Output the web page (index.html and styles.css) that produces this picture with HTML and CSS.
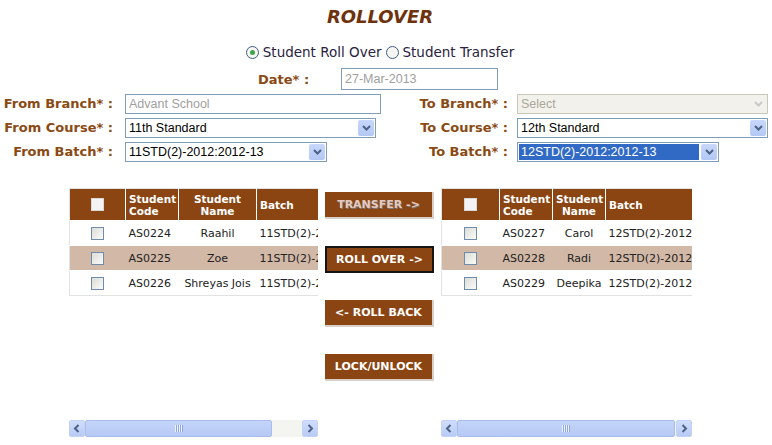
FILE: index.html
```html
<!DOCTYPE html>
<html>
<head>
<meta charset="utf-8">
<link rel="stylesheet" href="styles.css">
</head>
<body>
<h1 class="title">ROLLOVER</h1>
<div class="radios">
  <label class="radio"><span class="rb on"></span>Student Roll Over</label>
  <label class="radio"><span class="rb"></span>Student Transfer</label>
</div>
<div class="date-row">
  <span class="lbl">Date* :</span>
  <span class="inp date">27-Mar-2013</span>
</div>
<div class="form">
  <span class="lbl">From Branch* :</span>
  <span class="inp branch f2">Advant School</span>
  <span class="lbl">To Branch* :</span>
  <span class="sel wide disabled f4"><span class="txt">Select</span><span class="arr"><svg width="9" height="6" viewBox="0 0 9 6"><path d="M1 1 L4.5 4.5 L8 1" fill="none" stroke="#c9c9c9" stroke-width="2"/></svg></span></span>

  <span class="lbl">From Course* :</span>
  <span class="sel course f2"><span class="txt">11th Standard</span><span class="arr"><svg width="9" height="6" viewBox="0 0 9 6"><path d="M1 1 L4.5 4.5 L8 1" fill="none" stroke="#4d6185" stroke-width="2"/></svg></span></span>
  <span class="lbl">To Course* :</span>
  <span class="sel wide f4"><span class="txt">12th Standard</span><span class="arr"><svg width="9" height="6" viewBox="0 0 9 6"><path d="M1 1 L4.5 4.5 L8 1" fill="none" stroke="#4d6185" stroke-width="2"/></svg></span></span>

  <span class="lbl">From Batch* :</span>
  <span class="sel batch f2"><span class="txt">11STD(2)-2012:2012-13</span><span class="arr"><svg width="9" height="6" viewBox="0 0 9 6"><path d="M1 1 L4.5 4.5 L8 1" fill="none" stroke="#4d6185" stroke-width="2"/></svg></span></span>
  <span class="lbl">To Batch* :</span>
  <span class="sel batch f4"><span class="txt hl">12STD(2)-2012:2012-13</span><span class="arr"><svg width="9" height="6" viewBox="0 0 9 6"><path d="M1 1 L4.5 4.5 L8 1" fill="none" stroke="#4d6185" stroke-width="2"/></svg></span></span>
</div>

<div class="main">
  <div class="pane left">
    <div class="clip">
      <table class="grid g1">
        <colgroup><col class="w0"><col class="w1"><col class="w2"><col class="w3"></colgroup>
        <thead>
          <tr><th class="c0"><span class="cb hd"></span></th><th>Student<br>Code</th><th class="ctr">Student<br>Name</th><th>Batch</th></tr>
        </thead>
        <tbody>
          <tr><td class="c0"><span class="cb"></span></td><td>AS0224</td><td class="ctr">Raahil</td><td>11STD(2)-2012:2012-13</td></tr>
          <tr class="alt"><td class="c0"><span class="cb"></span></td><td>AS0225</td><td class="ctr">Zoe</td><td>11STD(2)-2012:2012-13</td></tr>
          <tr><td class="c0"><span class="cb"></span></td><td>AS0226</td><td class="ctr">Shreyas Jois</td><td>11STD(2)-2012:2012-13</td></tr>
        </tbody>
      </table>
    </div>
    <div class="hscroll">
      <span class="sbtn"><svg width="8" height="9" viewBox="0 0 8 9"><path d="M5.5 1 L2 4.5 L5.5 8" fill="none" stroke="#4d6185" stroke-width="2"/></svg></span>
      <span class="thumb t1"><span class="grip"></span></span>
      <span class="track"></span>
      <span class="sbtn"><svg width="8" height="9" viewBox="0 0 8 9"><path d="M2.5 1 L6 4.5 L2.5 8" fill="none" stroke="#4d6185" stroke-width="2"/></svg></span>
    </div>
  </div>

  <div class="actions">
    <button class="btn dis">TRANSFER -&gt;</button>
    <button class="btn focus">ROLL OVER -&gt;</button>
    <button class="btn">&lt;- ROLL BACK</button>
    <button class="btn">LOCK/UNLOCK</button>
  </div>

  <div class="pane right">
    <div class="clip">
      <table class="grid g2">
        <colgroup><col class="w0"><col class="w1"><col class="w2"><col class="w3"></colgroup>
        <thead>
          <tr><th class="c0"><span class="cb hd"></span></th><th>Student<br>Code</th><th class="ctr">Student<br>Name</th><th>Batch</th></tr>
        </thead>
        <tbody>
          <tr><td class="c0"><span class="cb"></span></td><td>AS0227</td><td class="ctr">Carol</td><td>12STD(2)-2012:2012-13</td></tr>
          <tr class="alt"><td class="c0"><span class="cb"></span></td><td>AS0228</td><td class="ctr">Radi</td><td>12STD(2)-2012:2012-13</td></tr>
          <tr><td class="c0"><span class="cb"></span></td><td>AS0229</td><td class="ctr">Deepika</td><td>12STD(2)-2012:2012-13</td></tr>
        </tbody>
      </table>
    </div>
    <div class="hscroll">
      <span class="sbtn"><svg width="8" height="9" viewBox="0 0 8 9"><path d="M5.5 1 L2 4.5 L5.5 8" fill="none" stroke="#4d6185" stroke-width="2"/></svg></span>
      <span class="thumb t2"><span class="grip"></span></span>
      <span class="track"></span>
      <span class="sbtn"><svg width="8" height="9" viewBox="0 0 8 9"><path d="M2.5 1 L6 4.5 L2.5 8" fill="none" stroke="#4d6185" stroke-width="2"/></svg></span>
    </div>
  </div>
</div>
</body>
</html>
```

FILE: styles.css
```css
html, body { margin: 0; padding: 0; background: #fff; }
body { font-family: "DejaVu Sans", Verdana, sans-serif; font-size: 13px; color: #222; width: 772px; height: 445px; overflow: hidden; }

.title { margin: 0; padding: 6px 12px 0 0; height: 24px; text-align: center; font-size: 18px; font-weight: bold; font-style: italic; color: #6e320c; }

.radios { display: flex; justify-content: center; gap: 4px; margin-top: 13px; padding-right: 12px; height: 18px; align-items: center; color: #2a2240; font-size: 13.5px; }
.radio { display: flex; align-items: center; gap: 4px; }
.rb { width: 11px; height: 11px; border: 1px solid #3b5f87; border-radius: 50%; background: #f6f6f3; position: relative; }
.rb.on::after { content: ""; position: absolute; left: 3px; top: 3px; width: 5px; height: 5px; border-radius: 50%; background: #3fa34a; }

.lbl { font-weight: bold; color: #8a4a14; white-space: nowrap; }

.date-row { display: flex; align-items: center; margin-top: 7px; height: 22px; padding-left: 258px; }
.date-row .lbl { width: 83px; }

.inp { display: flex; align-items: center; box-sizing: border-box; border: 1px solid #7f9db9; height: 20px; padding-left: 3px; font-family: "Liberation Sans", Arial, sans-serif; font-size: 12.5px; color: #a0a0a0; background: #fff; }
.inp.date { width: 157px; height: 22px; }
.inp.branch { width: 256px; }

.form { display: grid; grid-template-columns: 113px 265px 130px 260px; grid-auto-rows: 20px; row-gap: 4px; margin-top: 4px; align-items: center; }
.form .lbl { text-align: right; line-height: 20px; }
.form .f2 { margin-left: 12px; }
.form .f4 { margin-left: 9px; }

.sel { display: flex; align-items: stretch; box-sizing: border-box; border: 1px solid #7f9db9; height: 20px; padding: 1px; background: #fff; font-family: "Liberation Sans", Arial, sans-serif; font-size: 12.5px; color: #000; }
.sel .txt { flex: 1; display: flex; align-items: center; padding-left: 2px; white-space: nowrap; overflow: hidden; }
.sel .txt.hl { background: #316ac5; color: #fff; margin-right: 2px; }
.sel .arr { width: 16px; display: flex; align-items: center; justify-content: center; background: linear-gradient(#c8d7fb, #b2c8f4); border-radius: 2px; }
.sel.course { width: 251px; }
.sel.wide { width: 251px; }
.sel.batch { width: 202px; }
.sel.disabled { background: #f2f1ec; border-color: #c9c7ba; color: #aca899; }
.sel.disabled .arr { background: #f2f1ec; }

.main { display: flex; margin-top: 26px; padding-left: 69px; gap: 7px; }
.pane { display: flex; flex-direction: column; height: 249px; }
.pane.left { width: 249px; }
.pane.right { width: 251px; }
.clip { overflow: hidden; flex: 1; }

.grid { border-collapse: collapse; table-layout: fixed; font-size: 11px; white-space: nowrap; border: 1px solid #e2e2e2; }
.g1 { width: 360px; }
.g2 { width: 360px; }
.g1 .w0 { width: 56px; } .g1 .w1 { width: 53px; } .g1 .w2 { width: 78px; } .g1 .w3 { width: 173px; }
.g2 .w0 { width: 58px; } .g2 .w1 { width: 53px; } .g2 .w2 { width: 53px; } .g2 .w3 { width: 196px; }
.grid th { background: #8b4513; color: #fff; font-weight: bold; font-size: 10.5px; text-align: left; height: 31px; padding: 0 3px; line-height: 12px; border-left: 1px solid #fff; overflow: hidden; }
.grid th:first-child { border-left: none; }
.grid td { height: 24px; padding: 0 3px; color: #222; border-top: 1px solid #fff; overflow: hidden; }
.grid .ctr { text-align: center; }
.grid .c0 { text-align: center; }
.grid tr.alt td { background: #d2b8a6; }

.cb { display: inline-block; width: 11px; height: 11px; border: 1px solid #6f8cac; background: linear-gradient(135deg, #dcdcd6, #fbfbf9); vertical-align: middle; }
.cb.hd { background: #f4f4f4; border-color: #d8d8d8; }

.actions { display: flex; flex-direction: column; gap: 27px; padding-top: 4px; width: 109px; }
.btn { box-sizing: border-box; width: 109px; height: 27px; background: #8b4513; color: #fff; font-family: "DejaVu Sans", Verdana, sans-serif; font-weight: bold; font-size: 11px; border: none; border-right: 2px solid #d9cfc9; border-bottom: 2px solid #d9cfc9; padding: 0; }
.btn.dis { color: #e6c9bd; text-shadow: 1px 1px 0 #7a7a7a; }
.btn.focus { border: 2px solid #151515; }

.hscroll { display: flex; height: 17px; flex: none; }
.sbtn { width: 16px; display: flex; align-items: center; justify-content: center; background: linear-gradient(#d0ddfb, #b8cbf5); border: 1px solid #c3d3f8; box-sizing: border-box; border-radius: 2px; }
.thumb { display: flex; align-items: center; justify-content: center; background: linear-gradient(#c4d5fb, #b6c9f3); border: 1px solid #a9bdec; box-sizing: border-box; border-radius: 2px; }
.thumb.t1 { width: 187px; }
.thumb.t2 { width: 218px; }
.grip { width: 8px; height: 7px; background: repeating-linear-gradient(90deg, #eef3ff 0 1px, #8ea7df 1px 2px); }
.track { flex: 1; background: #f4f4f0; }
```
